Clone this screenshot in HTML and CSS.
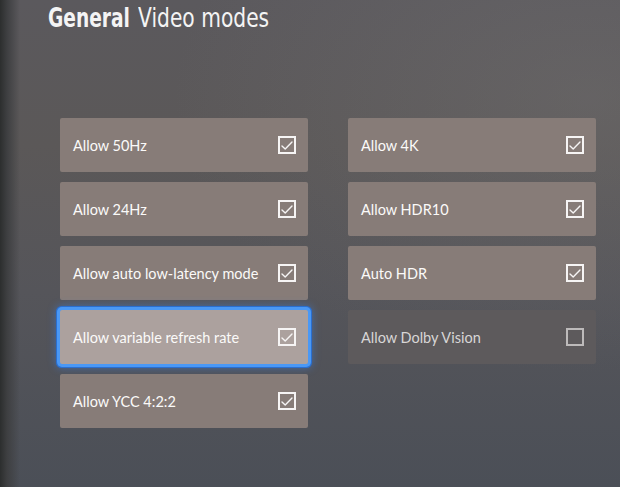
FILE: index.html
```html
<!DOCTYPE html>
<html>
<head>
<meta charset="utf-8">
<link rel="stylesheet" href="styles.css">
</head>
<body>
<div class="screen">
  <h1 class="title"><span class="part strong"><span class="squeeze">General</span></span><span class="part rest"><span class="squeeze">Video modes</span></span></h1>
  <div class="grid">
    <div class="col">
      <div class="tile"><span>Allow 50Hz</span><svg class="box" viewBox="0 0 18 18"><rect x="1" y="1" width="16" height="16"/><polyline points="4,10 7.2,13 14,6"/></svg></div>
      <div class="tile"><span>Allow 24Hz</span><svg class="box" viewBox="0 0 18 18"><rect x="1" y="1" width="16" height="16"/><polyline points="4,10 7.2,13 14,6"/></svg></div>
      <div class="tile"><span>Allow auto low-latency mode</span><svg class="box" viewBox="0 0 18 18"><rect x="1" y="1" width="16" height="16"/><polyline points="4,10 7.2,13 14,6"/></svg></div>
      <div class="tile focused"><span>Allow variable refresh rate</span><svg class="box" viewBox="0 0 18 18"><rect x="1" y="1" width="16" height="16"/><polyline points="4,10 7.2,13 14,6"/></svg></div>
      <div class="tile"><span>Allow YCC 4:2:2</span><svg class="box" viewBox="0 0 18 18"><rect x="1" y="1" width="16" height="16"/><polyline points="4,10 7.2,13 14,6"/></svg></div>
    </div>
    <div class="col">
      <div class="tile"><span>Allow 4K</span><svg class="box" viewBox="0 0 18 18"><rect x="1" y="1" width="16" height="16"/><polyline points="4,10 7.2,13 14,6"/></svg></div>
      <div class="tile"><span>Allow HDR10</span><svg class="box" viewBox="0 0 18 18"><rect x="1" y="1" width="16" height="16"/><polyline points="4,10 7.2,13 14,6"/></svg></div>
      <div class="tile"><span>Auto HDR</span><svg class="box" viewBox="0 0 18 18"><rect x="1" y="1" width="16" height="16"/><polyline points="4,10 7.2,13 14,6"/></svg></div>
      <div class="tile dim"><span>Allow Dolby Vision</span><svg class="box" viewBox="0 0 18 18"><rect x="1" y="1" width="16" height="16"/></svg></div>
    </div>
  </div>
</div>
</body>
</html>
```
FILE: styles.css
```css
html, body {
  margin: 0;
  padding: 0;
}
body {
  width: 620px;
  height: 487px;
  overflow: hidden;
}
.screen {
  width: 620px;
  height: 487px;
  box-sizing: border-box;
  padding: 0 0 0 48px;
  background:
    linear-gradient(to right, #2c2e2e 0px, #3e3f41 7px, rgba(70,70,74,0) 20px),
    radial-gradient(ellipse at 95% 20%, rgba(120,118,118,0.35), rgba(120,118,118,0) 50%),
    linear-gradient(to bottom, #5b595d 0%, #5b5858 30%, #55555a 60%, #4b4f57 100%);
  color: #fff;
  font-family: Lato, "Open Sans", sans-serif;
}
.title {
  margin: 0;
  padding-top: 1px;
  height: 118px;
  box-sizing: border-box;
  display: flex;
  gap: 10px;
  align-items: flex-start;
  font-family: "DejaVu Sans", sans-serif;
  font-weight: normal;
  font-size: 27px;
  line-height: 34px;
  color: #f4f4f4;
}
.part {
  display: block;
  white-space: nowrap;
}
.strong {
  width: 80px;
  font-weight: bold;
}
.rest {
  width: 131px;
}
.squeeze {
  display: inline-block;
  transform-origin: 0 50%;
}
.strong .squeeze {
  transform: scaleX(0.69);
}
.rest .squeeze {
  transform: scaleX(0.75);
}
.grid {
  display: flex;
  gap: 40px;
  margin-left: 12px;
}
.col {
  display: flex;
  flex-direction: column;
  gap: 10px;
  width: 248px;
}
.tile {
  height: 54px;
  border-radius: 2px;
  background: #877c78;
  display: flex;
  align-items: center;
  justify-content: space-between;
  padding: 0 12px 0 13px;
  box-sizing: border-box;
  font-size: 14.5px;
  color: #fbfaf9;
}
.tile.focused {
  background: #aca19e;
  box-shadow: 0 0 0 3px #4a98f5, 0 0 0 4px #2a6fd0, 0 0 8px 4px rgba(60,140,255,0.45);
}
.tile.dim {
  background: #5d5a5c;
  color: #d8d6d6;
}
.box {
  width: 18px;
  height: 18px;
  flex: none;
  fill: none;
  stroke: #f6f4f4;
}
.box rect {
  stroke-width: 2;
}
.box polyline {
  stroke-width: 1.4;
  stroke-linecap: round;
  stroke-linejoin: round;
}
.tile.dim .box {
  stroke: #bdbaba;
}
```
